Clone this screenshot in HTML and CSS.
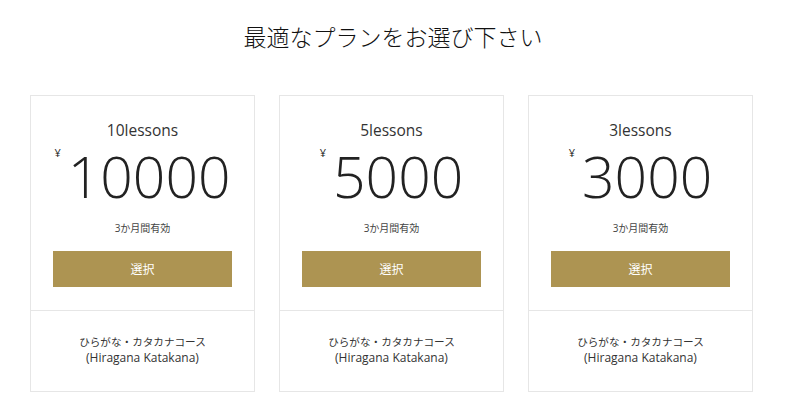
FILE: index.html
```html
<!DOCTYPE html>
<html lang="ja">
<head>
    <meta charset="UTF-8">
    <meta name="viewport" content="width=device-width, initial-scale=1.0">
    <title>プラン選択</title>
    <link rel="stylesheet" href="styles.css">
</head>
<body>
    <h1 class="page-title">最適なプランをお選び下さい</h1>

    <div class="plans">
        <!-- 10 lessons -->
        <div class="plan">
            <div class="plan-main">
                <p class="plan-name">10lessons</p>
                <p class="plan-price"><span class="yen">¥</span>10000</p>
                <p class="plan-term">3か月間有効</p>
                <button class="plan-button">選択</button>
            </div>
            <div class="plan-course">
                <p><span class="jp">ひらがな・カタカナコース</span><br>(Hiragana Katakana)</p>
            </div>
        </div>

        <!-- 5 lessons -->
        <div class="plan">
            <div class="plan-main">
                <p class="plan-name">5lessons</p>
                <p class="plan-price"><span class="yen">¥</span>5000</p>
                <p class="plan-term">3か月間有効</p>
                <button class="plan-button">選択</button>
            </div>
            <div class="plan-course">
                <p><span class="jp">ひらがな・カタカナコース</span><br>(Hiragana Katakana)</p>
            </div>
        </div>

        <!-- 3 lessons -->
        <div class="plan">
            <div class="plan-main">
                <p class="plan-name">3lessons</p>
                <p class="plan-price"><span class="yen">¥</span>3000</p>
                <p class="plan-term">3か月間有効</p>
                <button class="plan-button">選択</button>
            </div>
            <div class="plan-course">
                <p><span class="jp">ひらがな・カタカナコース</span><br>(Hiragana Katakana)</p>
            </div>
        </div>
    </div>
</body>
</html>
```

FILE: styles.css
```css
body {
    font-family: "Open Sans", "Noto Sans CJK JP", sans-serif;
    background-color: #fff;
    color: #333;
    margin: 0;
    padding: 0;
}

p {
    margin: 0;
}

.page-title {
    margin: 20px 0 0;
    text-align: center;
    font-size: 23px;
    font-weight: 300;
    line-height: 34px;
    color: #111;
}

.plans {
    display: flex;
    gap: 24px;
    margin: 41px 0 0 30px;
}

.plan {
    width: 223px;
    border: 1px solid #e6e6e6;
    text-align: center;
}

.plan-main {
    padding: 23px 22px 23px;
    border-bottom: 1px solid #e6e6e6;
}

.plan-name {
    font-size: 15.5px;
    line-height: 22px;
    color: #333;
}

.plan-price {
    margin-top: 10px;
    font-size: 57px;
    font-weight: 300;
    line-height: 50px;
    color: #222;
}

    .plan-price .yen {
        display: inline-block;
        vertical-align: top;
        margin: -4px 7px 0 0;
        font-size: 11px;
        font-weight: normal;
        line-height: 12px;
    }

.plan-term {
    margin-top: 20px;
    font-size: 10px;
    line-height: 14px;
    color: #444;
}

.plan-button {
    display: block;
    width: 100%;
    height: 36px;
    margin-top: 16px;
    border: none;
    background-color: #ad9452;
    color: #fff;
    font-family: inherit;
    font-size: 12px;
    cursor: pointer;
}

.plan-course {
    padding: 23px 10px 25px;
    font-size: 12px;
    line-height: 16px;
    color: #333;
}

    .plan-course .jp {
        font-size: 10.6px;
    }
```
